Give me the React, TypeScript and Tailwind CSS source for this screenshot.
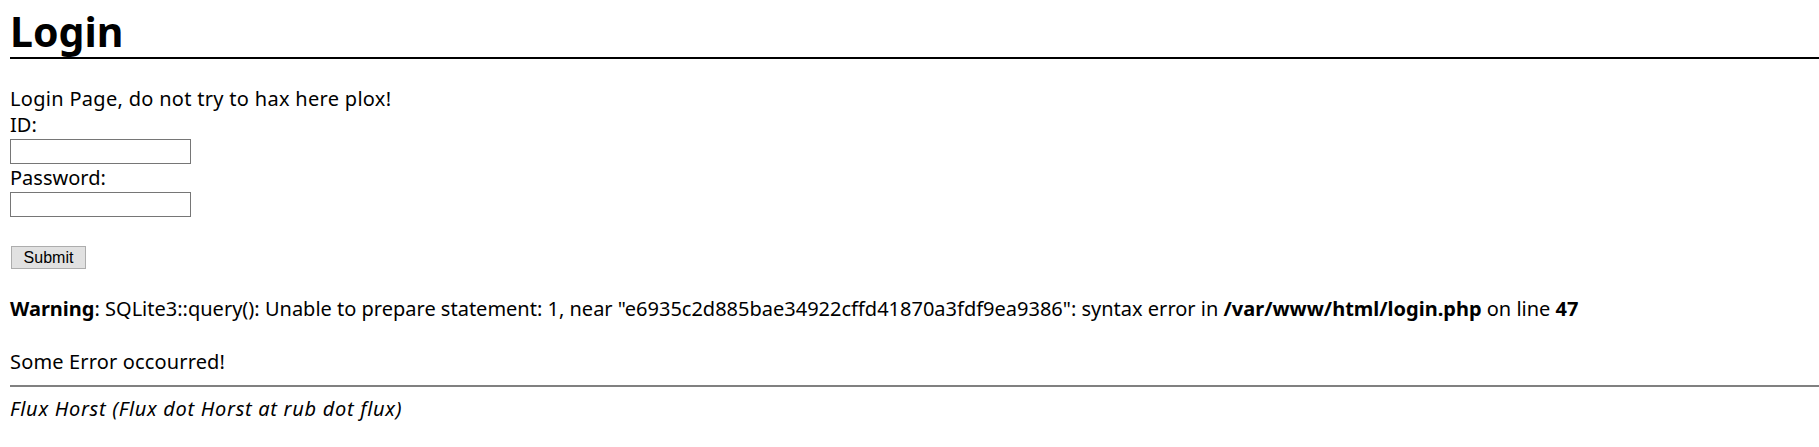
import React from 'react';

const font = { fontFamily: '"Noto Sans", "Open Sans", sans-serif' };

const Line: React.FC<{ children: React.ReactNode; className?: string }> = ({ children, className = '' }) => (
  <div className={`h-[26px] leading-[26px] whitespace-nowrap ${className}`}>{children}</div>
);

const App: React.FC = () => {
  return (
    <div className="min-h-[447px] bg-white text-black text-[20px] pl-[10px] overflow-hidden" style={font}>
      <h1 className="mt-[6px] h-[53px] leading-[51px] text-[41px] font-bold border-b-2 border-black">Login</h1>

      <div className="mt-[27px]">
        <Line className="tracking-[0.3px]">Login Page, do not try to hax here plox!</Line>
        <Line>ID:</Line>
        <div className="h-[27px] pt-[1px]">
          <input type="text" className="block h-[25px] w-[181px] border border-[#767676] bg-white" />
        </div>
        <Line>Password:</Line>
        <div className="h-[27px] pt-[1px]">
          <input type="password" className="block h-[25px] w-[181px] border border-[#767676] bg-white" />
        </div>
      </div>

      <div className="mt-[28px] pl-[1px] flex">
        <button
          type="button"
          className="h-[23px] w-[75px] border border-[#adadad] bg-[#e1e1e1] text-[16px] leading-[21px] text-black"
          style={{ fontFamily: '"Liberation Sans", Arial, sans-serif' }}
        >
          Submit
        </button>
      </div>

      <Line className="mt-[27px]">
        <b>Warning</b>: SQLite3::query(): Unable to prepare statement: 1, near "e6935c2d885bae34922cffd41870a3fdf9ea9386": syntax error in{' '}
        <b>/var/www/html/login.php</b> on line <b>47</b>
      </Line>

      <Line className="mt-[27px] tracking-[0.15px]">Some Error occourred!</Line>

      <div className="mt-[10px] h-[2px] bg-[#808080]" />

      <Line className="mt-[9px] italic tracking-[0.7px]">Flux Horst (Flux dot Horst at rub dot flux)</Line>
    </div>
  );
};

export default App;
